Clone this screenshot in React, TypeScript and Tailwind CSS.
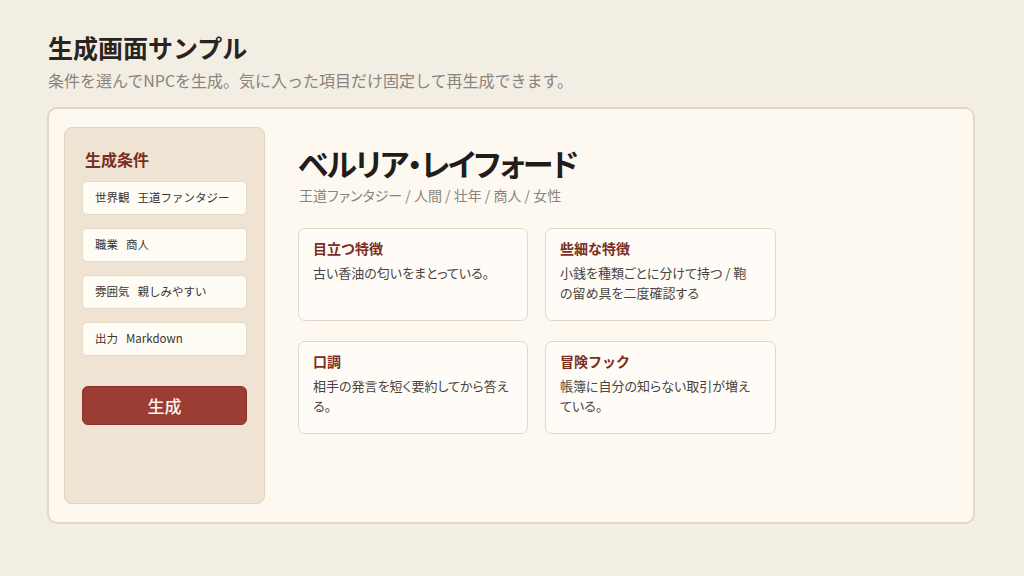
import React from 'react'

const conditions = [
  { label: '世界観', value: '王道ファンタジー' },
  { label: '職業', value: '商人' },
  { label: '雰囲気', value: '親しみやすい' },
  { label: '出力', value: 'Markdown' },
]

// line breaks follow the reference wrapping
const traits = [
  { title: '目立つ特徴', lines: ['古い香油の匂いをまとっている。'] },
  { title: '些細な特徴', lines: ['小銭を種類ごとに分けて持つ / 鞄', 'の留め具を二度確認する'] },
  { title: '口調', lines: ['相手の発言を短く要約してから答え', 'る。'] },
  { title: '冒険フック', lines: ['帳簿に自分の知らない取引が増え', 'ている。'] },
]

export default function App() {
  return (
    <div
      className="w-[1024px] h-[576px] bg-[#f3eee4] px-[47px] pt-[30px] overflow-hidden"
      style={{ fontFamily: '"Noto Sans CJK JP", "Noto Sans", sans-serif' }}
    >
      <h1 className="text-[25px] leading-[34px] font-bold text-[#2a2420] pl-[1px]">生成画面サンプル</h1>
      <p className="text-[16px] leading-[22px] text-[#8a847c] pl-[1px] mt-[5px]">
        条件を選んでNPCを生成。気に入った項目だけ固定して再生成できます。
      </p>

      <div className="mt-[16px] w-[928px] h-[417px] rounded-[10px] border-2 border-[#e3d8c8] bg-[#fdf9f0] px-[15px] py-[18px] flex gap-[33px]">
        <aside className="w-[201px] rounded-[8px] border border-[#e0d3c0] bg-[#efe3d3] px-[17px] pt-[20px]">
          <h2 className="text-[16px] leading-[22px] font-bold text-[#7a2e22] pl-[3px]">生成条件</h2>
          <div className="mt-[11px] flex flex-col gap-[13px]">
            {conditions.map((c) => (
              <div
                key={c.label}
                className="h-[34px] rounded-[5px] border border-[#e5d9c8] bg-[#fffcf6] px-[12px] flex items-center text-[11.5px] text-[#3a3430]"
              >
                <span>{c.label}</span>
                <span className="ml-[8px]">{c.value}</span>
              </div>
            ))}
          </div>
          <button className="mt-[30px] w-full h-[39px] rounded-[6px] bg-[#9b3d34] border border-[#8a332b] text-[#fdf3ec] text-[17px] font-medium">
            生成
          </button>
        </aside>

        <main className="flex-1 pt-[16px]">
          <h2 className="text-[31px] leading-[40px] font-bold text-[#221d1a] [font-feature-settings:'palt'] tracking-[-1.8px]">
            ベルリア・レイフォード
          </h2>
          <p className="text-[14px] leading-[20px] text-[#8a847c] mt-[2px] pl-[1px] [font-feature-settings:'palt']">
            王道ファンタジー / 人間 / 壮年 / 商人 / 女性
          </p>
          <div className="mt-[23px] grid grid-cols-[230px_231px] gap-x-[17px] gap-y-[20px]">
            {traits.map((t) => (
              <div
                key={t.title}
                className="h-[93px] rounded-[7px] border border-[#e3d8c8] bg-[#fffcf7] px-[14px] pt-[9px]"
              >
                <h3 className="text-[14px] leading-[20px] font-bold text-[#7a2e22]">{t.title}</h3>
                <p className="mt-[5px] text-[13px] leading-[20px] text-[#4a4440] whitespace-nowrap [font-feature-settings:'palt']">
                  {t.lines.map((l, i) => (
                    <span key={i} className="block">
                      {l}
                    </span>
                  ))}
                </p>
              </div>
            ))}
          </div>
        </main>
      </div>
    </div>
  )
}
